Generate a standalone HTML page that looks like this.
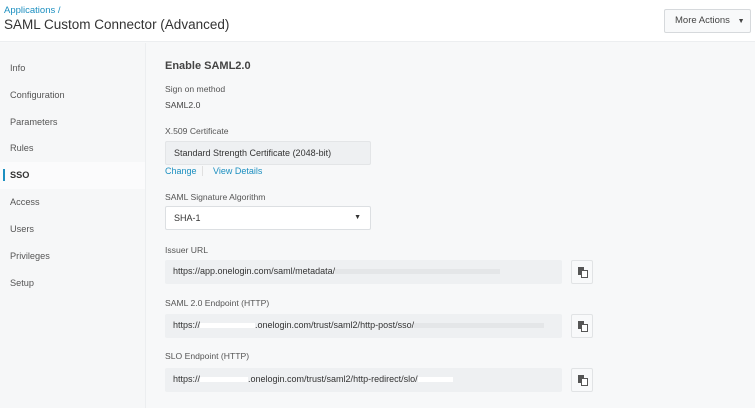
<!DOCTYPE html>
<html><head><style>
*{margin:0;padding:0;box-sizing:border-box}
body{width:755px;height:408px;overflow:hidden;background:#f7f8f9;font-family:"Liberation Sans",sans-serif;color:#444;position:relative}
.a{position:absolute;white-space:nowrap}
.hdr{left:0;top:0;width:755px;height:42px;background:#fff;border-bottom:1px solid #eceef0}
.crumb{left:4px;top:5px;font-size:9.5px;color:#1c8fc0}
.title{left:4px;top:17px;font-size:13.5px;color:#333}
.btn{left:664px;top:9px;width:87px;height:24px;border:1px solid #d6d9dc;background:#f8f9fa;font-size:9.5px;color:#444;line-height:22px;padding-left:10px;border-radius:2px}
.side{left:0;top:43px;width:146px;height:365px;background:#f6f7f8;border-right:1px solid #eceef0}
.si{left:10px;font-size:9.2px;color:#555}
.lbl{left:165px;font-size:8.6px;color:#555}
.box{left:165px;background:#eef0f2;font-size:9px;color:#333;padding-left:8px;line-height:23px;border-radius:2px;overflow:hidden}
.cp{left:571px;width:22px;height:24px;border:1px solid #e1e3e5;background:#f8f9fa;border-radius:2px}
.blur{display:inline-block;height:5px;background:#fff;vertical-align:middle}
</style></head><body>
<div class="a hdr"></div>
<div class="a crumb">Applications /</div>
<div class="a title">SAML Custom Connector (Advanced)</div>
<div class="a btn">More Actions <span style="font-size:7px;margin-left:5px">▼</span></div>
<div class="a side"></div>
<div class="a" style="left:0;top:162px;width:145px;height:27px;background:#fbfbfc"></div>
<div class="a" style="left:3px;top:169px;width:2px;height:12px;background:#1c8fc0"></div>
<div class="a si" style="top:63px">Info</div>
<div class="a si" style="top:90px">Configuration</div>
<div class="a si" style="top:117px">Parameters</div>
<div class="a si" style="top:143px">Rules</div>
<div class="a si" style="top:170px;font-weight:bold;color:#333">SSO</div>
<div class="a si" style="top:197px">Access</div>
<div class="a si" style="top:224px">Users</div>
<div class="a si" style="top:251px">Privileges</div>
<div class="a si" style="top:278px">Setup</div>

<div class="a" style="left:165px;top:60px;font-size:11px;font-weight:bold;color:#444">Enable SAML2.0</div>
<div class="a lbl" style="top:84px">Sign on method</div>
<div class="a lbl" style="top:100px;color:#444">SAML2.0</div>
<div class="a lbl" style="top:126px">X.509 Certificate</div>
<div class="a box" style="top:141px;width:206px;height:24px;border:1px solid #e3e5e7;line-height:22px">Standard Strength Certificate (2048-bit)</div>
<div class="a" style="left:165px;top:166px;font-size:9px;color:#1c8fc0">Change</div>
<div class="a" style="left:202px;top:166px;width:1px;height:10px;background:#e0e0e0"></div>
<div class="a" style="left:213px;top:166px;font-size:9px;color:#1c8fc0">View Details</div>
<div class="a lbl" style="top:192px">SAML Signature Algorithm</div>
<div class="a" style="left:165px;top:206px;width:206px;height:24px;background:#fff;border:1px solid #dcdfe2;border-radius:2px;font-size:9px;color:#333;line-height:22px;padding-left:8px">SHA-1<span class="a" style="right:9px;top:0;font-size:7px">▼</span></div>
<div class="a lbl" style="top:245px">Issuer URL</div>
<div class="a box" style="top:260px;width:397px;height:24px">https://app.onelogin.com/saml/metadata/<span class="blur" style="width:165px;background:#e4e6e8"></span></div>
<div class="a cp" style="top:260px"><svg class="a" style="left:6px;top:6px" width="10" height="11"><rect x="0" y="0" width="6" height="8" fill="#555"/><rect x="3.5" y="3.5" width="6" height="7" fill="#fff" stroke="#555"/></svg></div>
<div class="a lbl" style="top:298px">SAML 2.0 Endpoint (HTTP)</div>
<div class="a box" style="top:314px;width:397px;height:24px">https://<span class="blur" style="width:55px"></span>.onelogin.com/trust/saml2/http-post/sso/<span class="blur" style="width:130px;background:#e4e6e8"></span></div>
<div class="a cp" style="top:314px"><svg class="a" style="left:6px;top:6px" width="10" height="11"><rect x="0" y="0" width="6" height="8" fill="#555"/><rect x="3.5" y="3.5" width="6" height="7" fill="#fff" stroke="#555"/></svg></div>
<div class="a lbl" style="top:351px">SLO Endpoint (HTTP)</div>
<div class="a box" style="top:368px;width:397px;height:24px">https://<span class="blur" style="width:48px"></span>.onelogin.com/trust/saml2/http-redirect/slo/<span class="blur" style="width:35px"></span></div>
<div class="a cp" style="top:368px"><svg class="a" style="left:6px;top:6px" width="10" height="11"><rect x="0" y="0" width="6" height="8" fill="#555"/><rect x="3.5" y="3.5" width="6" height="7" fill="#fff" stroke="#555"/></svg></div>
</body></html>
